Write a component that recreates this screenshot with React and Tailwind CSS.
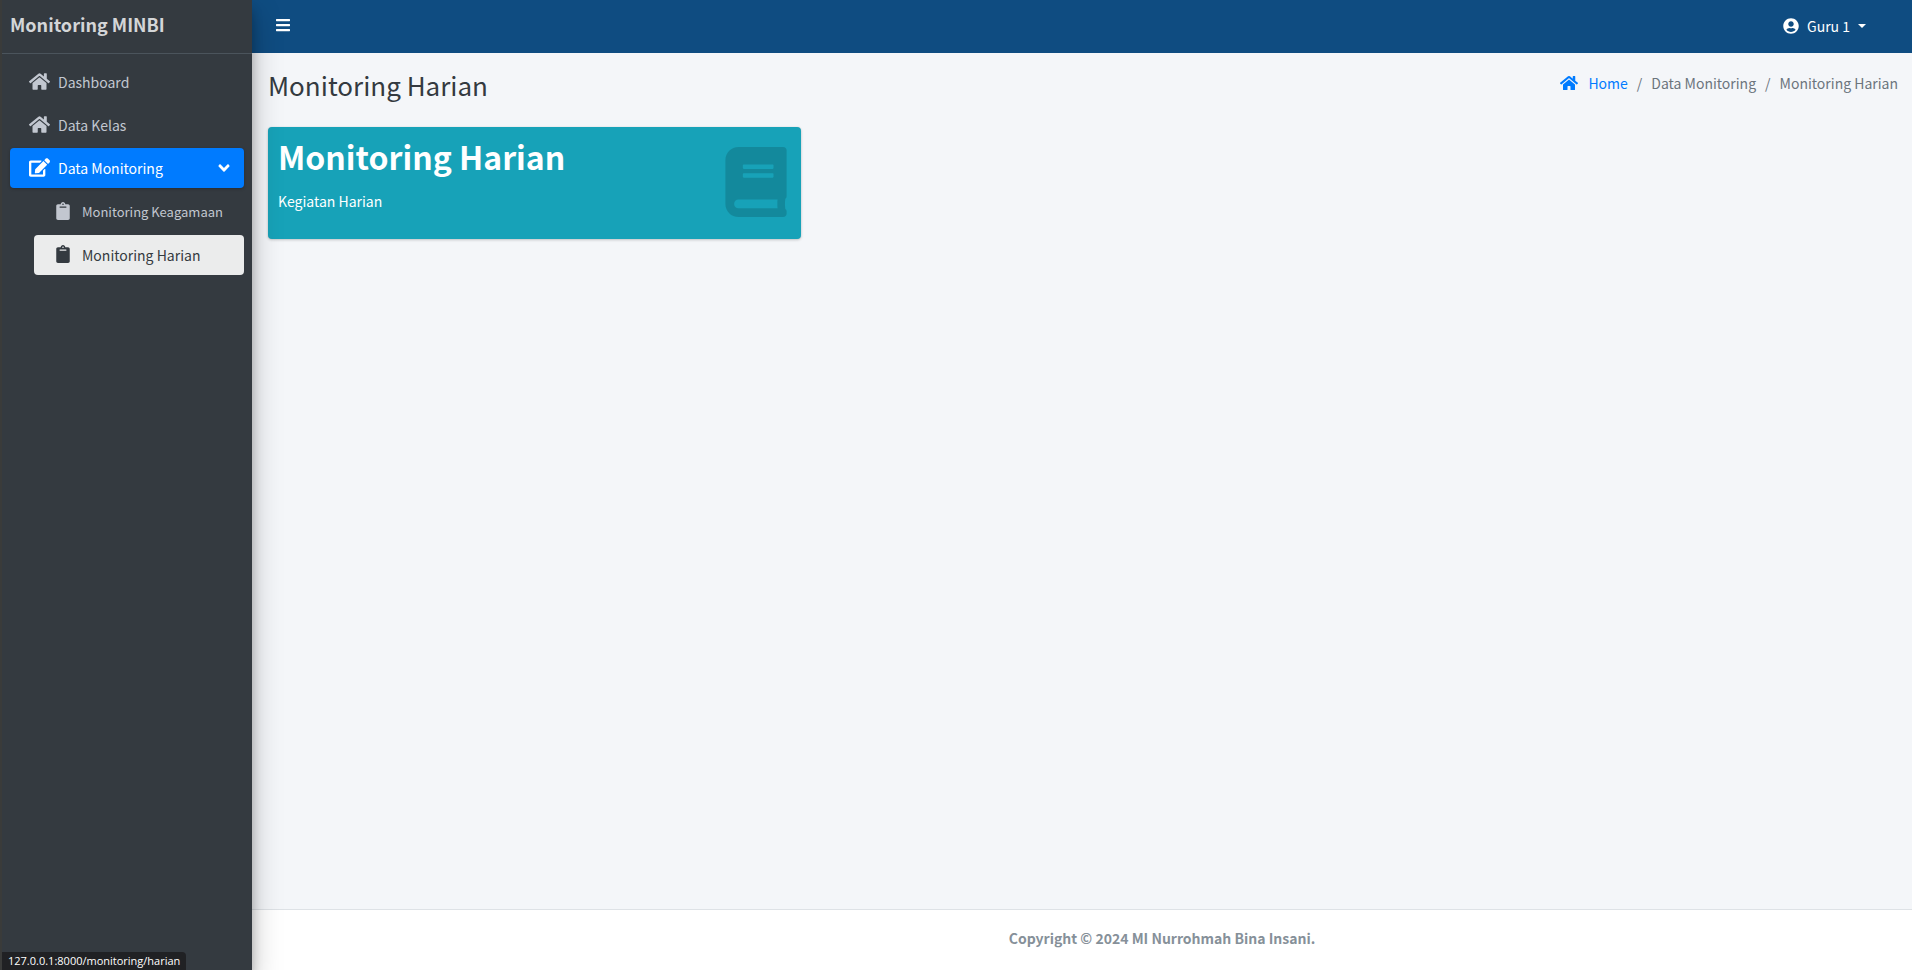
import { FaAngleDown, FaBars, FaBook, FaClipboard, FaEdit, FaHome, FaUserCircle } from "react-icons/fa";

const mainLinks = [
  { label: "Dashboard", href: "#dashboard" },
  { label: "Data Kelas", href: "#kelas" },
];

function Sidebar() {
  return (
    <aside className="relative z-10 w-[252px] shrink-0 border-l-2 border-[#3a3b3a] bg-[#343a40] text-[#c2c7d0] shadow-[0_14px_28px_rgba(0,0,0,0.25),0_10px_10px_rgba(0,0,0,0.22)]">
      <a href="#top" className="flex h-[54px] items-center border-b border-[#4b545c] px-2 pb-[6px] text-lg font-bold text-[#d4d6d8]">
        Monitoring MINBI
      </a>
      <nav className="mt-2 px-2 text-[14px]">
        <ul className="flex flex-col gap-[3px]">
          {mainLinks.map((item) => (
            <li key={item.label}>
              <a href={item.href} className="flex h-10 items-center gap-2 pl-[19px]">
                <FaHome size={21} className="-mt-[2px] shrink-0" />
                {item.label}
              </a>
            </li>
          ))}
          <li>
            <button className="flex h-10 w-[234px] items-center gap-2 rounded bg-[#007bff] pr-[11px] pl-[19px] text-white shadow-[0_1px_3px_rgba(0,0,0,0.25)]">
              <FaEdit size={21} className="-mt-[2px] shrink-0" />
              <span className="flex-1 text-left">Data Monitoring</span>
              <FaAngleDown size={18} />
            </button>
            <ul className="mt-1 flex w-[234px] flex-col gap-[3px] pl-6">
              <li>
                <a href="#keagamaan" className="flex h-10 items-center gap-[11px] pl-[21px] text-[13px] whitespace-nowrap">
                  <FaClipboard size={18} className="-mt-[2px] w-4" />
                  Monitoring Keagamaan
                </a>
              </li>
              <li>
                <a href="#harian" aria-current="page" className="flex h-10 items-center gap-[11px] rounded bg-[#ebecec] pl-[21px] whitespace-nowrap text-[#343a40]">
                  <FaClipboard size={18} className="-mt-[2px] w-4" />
                  Monitoring Harian
                </a>
              </li>
            </ul>
          </li>
        </ul>
      </nav>
      <div className="absolute bottom-0 left-0 rounded-tr bg-[#202124] px-[6px] font-['Open_Sans',sans-serif] text-[11px] leading-[18px] text-white">
        127.0.0.1:8000/monitoring/harian
      </div>
    </aside>
  );
}

export default function App() {
  return (
    <div className="flex min-h-screen bg-[#f4f6f9] font-['Noto_Sans_CJK_SC','Noto_Sans',sans-serif] text-[14px] leading-6 text-[#212529]">
      <Sidebar />
      <div className="flex min-w-0 flex-1 flex-col">
        <header className="flex h-[53px] items-center justify-between bg-[#0f4c81] pr-[46px] pb-[2px] pl-[23px] text-white">
          <button aria-label="Menu" className="-mt-[2px]">
            <FaBars size={16} />
          </button>
          <button className="flex items-center gap-2">
            <FaUserCircle size={16} />
            Guru 1
            <span className="border-x-4 border-t-4 border-x-transparent border-t-white" />
          </button>
        </header>
        <main className="flex-1 px-4">
          <div className="flex items-start justify-between pt-[14px]">
            <h1 className="text-[26px] leading-9 text-[#343a40]">Monitoring Harian</h1>
            <nav aria-label="Breadcrumb" className="-mr-[2px] pt-1">
              <ol className="flex gap-[9px] text-[#6c757d]">
                <li>
                  <a href="#home" className="flex items-center gap-[10px] text-[#007bff]">
                    <FaHome size={18} />
                    Home
                  </a>
                </li>
                <li>/</li>
                <li>Data Monitoring</li>
                <li>/</li>
                <li>Monitoring Harian</li>
              </ol>
            </nav>
          </div>
          <div className="mt-6 grid grid-cols-3 gap-[15px]">
            <section className="flex h-28 items-start justify-between rounded bg-[#17a2b8] px-[10px] text-white shadow-[0_0_1px_rgba(0,0,0,0.13),0_1px_3px_rgba(0,0,0,0.2)]">
              <div className="pt-2">
                <h2 className="text-[32px] leading-[42px] font-bold">Monitoring Harian</h2>
                <p className="mt-3">Kegiatan Harian</p>
              </div>
              <FaBook className="mt-5 h-[70px] w-[70px] text-black/15" />
            </section>
          </div>
        </main>
        <footer className="flex h-[61px] items-center justify-center border-t border-[#dee2e6] bg-white pb-1 pl-40 font-bold text-[#869099]">
          Copyright © 2024 MI Nurrohmah Bina Insani.
        </footer>
      </div>
    </div>
  );
}
